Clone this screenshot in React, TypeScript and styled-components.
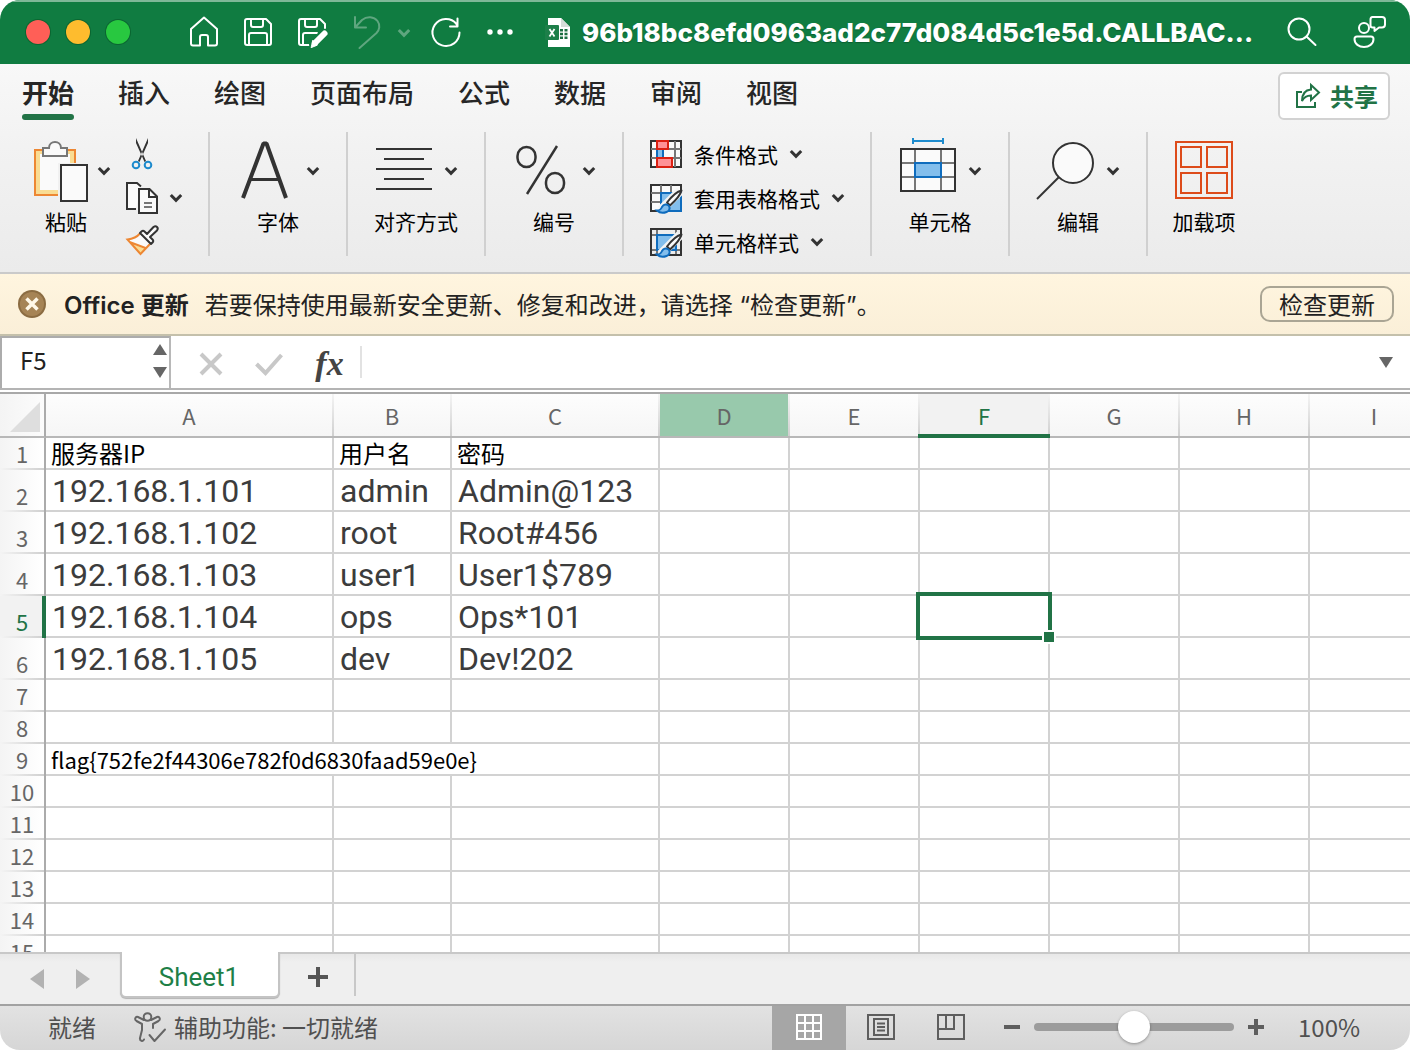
import React, { useState } from "react";
import styled, { createGlobalStyle, css } from "styled-components";

const ui = `"Inter", "Noto Sans CJK SC", sans-serif`;
const cjk = `"Noto Sans CJK SC", sans-serif`;
const green = "#217346";
const ink = "#333333";

const GlobalStyle = createGlobalStyle`
  * { box-sizing: border-box; }
  body { margin: 0; background: #ffffff; }
  button, input { font: inherit; color: inherit; margin: 0; }
  button { background: none; border: 0; padding: 0; cursor: default; }
  svg { display: block; flex: none; overflow: visible; }
`;

const Window = styled.div`
  display: flex;
  flex-direction: column;
  height: 100vh;
  overflow: hidden;
  border-radius: 20px;
  background: #ffffff;
  font-family: ${cjk};
  color: #222222;
`;

/* ---------- title bar ---------- */

const TitleBar = styled.header`
  display: flex;
  align-items: center;
  flex: none;
  height: 64px;
  padding: 0 26px;
  background: #107c41;
  border-top: 2px solid #7fb898;
  color: #ffffff;
`;

const Lights = styled.div`
  display: flex;
  gap: 16px;
  margin: 0 58px 2px 0;
`;

const Light = styled.button<{ $fill: string }>`
  width: 24px;
  height: 24px;
  border-radius: 50%;
  background: ${(p) => p.$fill};
  box-shadow: 0 0 0 1px rgba(0, 60, 20, 0.35);
`;

const QuickTools = styled.div`
  display: flex;
  align-items: center;
  gap: 20px;
`;

const ToolSet = styled.div`
  display: flex;
  align-items: center;
  gap: 22px;
`;

const Faded = styled.div`
  display: flex;
  align-items: center;
  gap: 16px;
  color: #5fa67f;
`;

const DocTitle = styled.h1`
  display: flex;
  align-items: center;
  gap: 12px;
  flex: 1;
  min-width: 0;
  margin: 0 0 0 30px;
  font: 800 26px/32px ${ui};
  white-space: nowrap;
  text-shadow: 0 1px 1px rgba(0, 50, 20, 0.4);
`;

const TitleActions = styled.div`
  display: flex;
  align-items: center;
  gap: 34px;
`;

/* ---------- ribbon ---------- */

const Ribbon = styled.section`
  flex: none;
  padding-top: 8px;
  background: linear-gradient(#f8f8f8, #f2f2f2 40%, #ebebeb);
  border-bottom: 2px solid #cacaca;
`;

const TabRow = styled.nav`
  display: flex;
  justify-content: space-between;
  padding: 0 20px 0 22px;
`;

const Tabs = styled.div`
  display: flex;
  gap: 44px;
`;

const Tab = styled.button<{ $active?: boolean }>`
  position: relative;
  height: 48px;
  padding-bottom: 8px;
  font: 500 26px/40px ${cjk};
  color: #262626;
  white-space: nowrap;
  ${(p) =>
    p.$active &&
    css`
      font-weight: 700;
      &::after {
        content: "";
        position: absolute;
        inset: auto 0 0;
        height: 6px;
        border-radius: 3px;
        background: ${green};
      }
    `}
`;

const ShareButton = styled.button`
  display: flex;
  align-items: center;
  gap: 8px;
  height: 48px;
  padding: 0 10px 0 14px;
  border: 2px solid #d2d2d2;
  border-radius: 6px;
  background: #ffffff;
  color: ${green};
  font: 700 24px/36px ${cjk};
`;

const Groups = styled.div`
  display: flex;
  padding: 12px 0 16px;
`;

const Group = styled.div<{ $width: number }>`
  display: flex;
  justify-content: center;
  flex: none;
  width: ${(p) => p.$width}px;
  height: 124px;
  border-right: 2px solid #d0d0d0;
  &:last-child { border-right: 0; }
`;

const BigButton = styled.button`
  display: flex;
  flex-direction: column;
  align-items: center;
  gap: 5px;
  padding-top: 8px;
  height: 124px;
  font: 400 21px/28px ${cjk};
  color: #000000;
`;

const IconRow = styled.span`
  display: flex;
  align-items: center;
  gap: 14px;
  height: 62px;
`;

const PasteButton = styled.button`
  display: grid;
  grid-template-columns: 64px 12px;
  grid-template-rows: 62px 28px;
  row-gap: 5px;
  align-items: center;
  align-content: start;
  padding-top: 8px;
  font: 400 21px/28px ${cjk};
  color: #000000;
`;

const ClipGroup = styled(Group)`
  justify-content: flex-start;
  gap: 16px;
  padding-left: 34px;
`;

const StyleGroup = styled(Group)`
  justify-content: flex-start;
  padding-left: 26px;
`;

const Stack = styled.div`
  display: flex;
  flex-direction: column;
`;

const SmallButton = styled.button`
  display: flex;
  align-items: center;
  flex: none;
  gap: 12px;
  height: 44px;
  font: 400 21px/28px ${cjk};
  color: #000000;
  white-space: nowrap;
`;

/* ---------- update notice ---------- */

const Notice = styled.section`
  display: flex;
  align-items: center;
  flex: none;
  height: 62px;
  padding: 0 16px 0 18px;
  background: linear-gradient(#fff5df, #faefd8);
  border-bottom: 2px solid #c4c0ab;
  font: 400 24px/36px ${ui};
  white-space: nowrap;
`;

const NoticeTitle = styled.strong`
  margin: 0 16px 0 18px;
  padding-top: 4px;
  font-weight: 600;
`;

const NoticeText = styled.span`
  flex: 1;
  padding-top: 4px;
`;

const NoticeButton = styled.button`
  height: 36px;
  padding: 4px 17px 0;
  border: 2px solid #aaa594;
  border-radius: 10px;
  line-height: 28px;
`;

/* ---------- formula bar ---------- */

const FormulaBar = styled.section`
  display: flex;
  flex: none;
  height: 58px;
  background: #ffffff;
  border-bottom: 2px solid #a8a8a8;
`;

const FormulaRow = styled.div`
  display: flex;
  align-items: center;
  flex: 1;
  height: 54px;
  padding-right: 17px;
  border-bottom: 2px solid #b4b4b4;
`;

const NameBox = styled.div`
  display: flex;
  align-items: center;
  width: 171px;
  height: 52px;
  padding: 0 2px 4px 0;
  border: 2px solid #acacac;
  border-bottom: 0;
  border-right-color: #b8b8b8;
`;

const NameInput = styled.input`
  flex: 1;
  min-width: 0;
  border: 0;
  padding: 0 0 2px 18px;
  background: none;
  outline: 0;
  font: 400 24px/36px ${cjk};
`;

const Spinner = styled.div`
  display: flex;
  flex-direction: column;
  gap: 12px;
`;

const FormulaTools = styled.div`
  display: flex;
  align-items: center;
  gap: 32px;
  padding: 4px 16px 0 28px;
`;

const FxButton = styled.button`
  width: 29px;
  font: italic 700 34px/32px "Liberation Serif", serif;
  color: #444444;
`;

const FormulaInput = styled.input`
  flex: 1;
  min-width: 0;
  height: 32px;
  border: 0;
  border-left: 2px solid #e2e2e2;
  outline: 0;
  padding: 0 12px;
  background: #ffffff;
`;

/* ---------- sheet ---------- */

const SheetArea = styled.main`
  flex: 1 1 0;
  min-height: 0;
  overflow: hidden;
  background: #ffffff;
`;

const Grid = styled.table`
  table-layout: fixed;
  width: 1440px;
  border-collapse: separate;
  border-spacing: 0;
`;

const Corner = styled.td`
  height: 44px;
  padding: 0 4px 4px 10px;
  vertical-align: bottom;
  background: linear-gradient(90deg, #f4f4f4, #fcfcfc);
  border-right: 2px solid #ababab;
  border-bottom: 2px solid #b8b8b8;
`;

const ColHead = styled.th<{ $tone: "plain" | "hover" | "active" }>`
  position: relative;
  height: 44px;
  padding: 0 2px 0 0;
  border-bottom: 2px solid #b8b8b8;
  background: linear-gradient(#fdfdfd, #f6f6f6);
  font: 400 22px/32px ${cjk};
  color: #666666;
  &::after {
    content: "";
    position: absolute;
    inset: 0 0 0 auto;
    width: 2px;
    background: linear-gradient(#f4f4f4, #d0d0d0);
  }
  ${(p) => p.$tone === "hover" && css`background: #98c9ac;`}
  ${(p) =>
    p.$tone === "active" &&
    css`
      background: #f2f2f2;
      color: ${green};
      &::before {
        content: "";
        position: absolute;
        inset: auto 0 -2px -2px;
        height: 4px;
        z-index: 1;
        background: ${green};
      }
    `}
`;

const RowHead = styled.th<{ $active: boolean }>`
  position: relative;
  padding: 0 0 4px;
  vertical-align: bottom;
  border-right: 2px solid #ababab;
  background: linear-gradient(90deg, #f4f4f4, #ffffff);
  font: 400 22px/26px ${cjk};
  color: #666666;
  &::after {
    content: "";
    position: absolute;
    inset: auto 0 0;
    height: 2px;
    background: linear-gradient(90deg, #f4f4f4, #d0d0d0);
  }
  ${(p) =>
    p.$active &&
    css`
      background: #f2f2f2;
      color: ${green};
      &::before {
        content: "";
        position: absolute;
        inset: 0 -2px 0 auto;
        width: 4px;
        z-index: 1;
        background: ${green};
      }
    `}
`;

const Row = styled.tr<{ $tall: boolean }>`
  height: ${(p) => (p.$tall ? 42 : 32)}px;
`;

const Cell = styled.td<{ $large?: boolean }>`
  position: relative;
  padding: 0 0 0 5px;
  border-right: 2px solid #d2d2d2;
  border-bottom: 2px solid #d2d2d2;
  vertical-align: bottom;
  white-space: nowrap;
  font: 400 24px/30px ${cjk};
  color: #000000;
  ${(p) =>
    p.$large &&
    css`
      padding-left: 6px;
      font: 400 32px/38px Roboto, sans-serif;
      color: #3c3c3c;
    `}
`;

const FlagText = styled.span`
  display: block;
  font-size: 22px;
  line-height: 30px;
`;

const Selection = styled.div`
  position: absolute;
  inset: -4px;
  border: 4px solid ${green};
  z-index: 1;
  &::after {
    content: "";
    position: absolute;
    right: -6px;
    bottom: -6px;
    width: 10px;
    height: 10px;
    background: ${green};
    box-shadow: 0 0 0 2px #ffffff;
  }
`;

/* ---------- sheet tabs ---------- */

const SheetTabs = styled.nav`
  display: flex;
  flex: none;
  height: 52px;
  background: linear-gradient(#e6e6e6, #efefef 10px);
`;

const TabNav = styled.div`
  display: flex;
  align-items: center;
  gap: 32px;
  width: 120px;
  padding-left: 30px;
  border-top: 2px solid #c8c8c8;
`;

const SheetTab = styled.button`
  width: 160px;
  height: 46px;
  padding: 6px 2px 0 0;
  border: 2px solid #c4c4c4;
  border-top: 0;
  border-radius: 0 0 6px 6px;
  background: #ffffff;
  box-shadow: 0 1px 1px rgba(0, 0, 0, 0.25);
  font: 400 26px/32px Roboto, sans-serif;
  color: #1e7f47;
`;

const TabRest = styled.div`
  flex: 1;
  border-top: 2px solid #c8c8c8;
`;

const AddSheet = styled.button`
  display: flex;
  align-items: center;
  justify-content: center;
  width: 76px;
  height: 42px;
  padding: 4px 0 0 2px;
  border-right: 2px solid #c8c8c8;
`;

/* ---------- status bar ---------- */

const StatusBar = styled.footer`
  display: flex;
  align-items: center;
  flex: none;
  height: 46px;
  padding: 0 48px;
  border-top: 2px solid #a2a2a2;
  background: linear-gradient(#e2e2e2, #d6d6d6);
  font: 400 24px/36px ${cjk};
  color: #505050;
  white-space: nowrap;
`;

const StatusText = styled.span`
  padding-bottom: 2px;
`;

const A11yButton = styled.button`
  display: flex;
  align-items: center;
  gap: 8px;
  margin-left: 38px;
`;

const Views = styled.div`
  display: flex;
  align-self: stretch;
  margin-left: auto;
`;

const ViewButton = styled.button<{ $active?: boolean }>`
  display: flex;
  align-items: center;
  justify-content: center;
  width: ${(p) => (p.$active ? 74 : 70)}px;
  padding-bottom: 2px;
  background: ${(p) => (p.$active ? "#a6a6a6" : "transparent")};
  color: ${(p) => (p.$active ? "#ffffff" : "#5e5e5e")};
`;

const Zoom = styled.div`
  display: flex;
  align-items: center;
  gap: 14px;
  margin-left: 18px;
  padding-bottom: 2px;
`;

const Slider = styled.input`
  appearance: none;
  width: 200px;
  height: 32px;
  background: none;
  &::-webkit-slider-runnable-track {
    height: 8px;
    border-radius: 4px;
    background: #9c9c9c;
  }
  &::-webkit-slider-thumb {
    appearance: none;
    width: 32px;
    height: 32px;
    margin-top: -12px;
    border-radius: 50%;
    background: #ffffff;
    box-shadow: 0 1px 3px rgba(0, 0, 0, 0.35);
  }
`;

const ZoomValue = styled.output`
  width: 64px;
  margin-left: 34px;
  padding-bottom: 2px;
`;

/* ---------- icons ---------- */

const Chevron = ({ color = ink, w = 3 }: { color?: string; w?: number }) => (
  <svg width="12" height="8" viewBox="0 0 12 8" fill="none" stroke={color} strokeWidth={w}>
    <path d="M.8 1 6 6.4 11.200 1" />
  </svg>
);

const Line32 = ({ children }: { children: React.ReactNode }) => (
  <svg width="32" height="32" viewBox="0 0 32 32" fill="none" stroke="currentColor" strokeWidth="2" strokeLinejoin="round" strokeLinecap="round">
    {children}
  </svg>
);

const HomeIcon = () => (
  <Line32>
    <path d="M3 12 16 .500 29 12V26.500a2 2 0 0 1-2 2H20V20q0-2-2-2h-4q-2 0-2 2v8.500H5a2 2 0 0 1-2-2z" />
  </Line32>
);
const SaveIcon = () => (
  <Line32>
    <path d="M5 2H24L29 7V26a2 2 0 0 1-2 2H5a2 2 0 0 1-2-2V4a2 2 0 0 1 2-2zM9 2v6q0 2 2 2h8q2 0 2-2V2M7 28V18q0-2 2-2h14q2 0 2 2v10" />
  </Line32>
);
const SaveEditIcon = () => (
  <Line32>
    <path d="M13 28H5a2 2 0 0 1-2-2V4a2 2 0 0 1 2-2H24L29 7v4M9 2v6q0 2 2 2h8q2 0 2-2V2M7 28V18q0-2 2-2h12" />
    <path d="M28 17 18 27.500" stroke="#107c41" strokeWidth="10" />
    <path d="M28.500 16.500 19 26" strokeWidth="6" />
    <path d="m17 23.500 4.500 4.500L15.500 30.500z" fill="currentColor" strokeWidth="1" />
  </Line32>
);
const UndoIcon = () => (
  <Line32>
    <path d="M5 0V10.500H16M5 10.500 12 3C17-1 24-.5 27.500 4c3 4 2 9-1 12L9.500 31" />
  </Line32>
);
const RedoIcon = () => (
  <Line32>
    <path d="M29.500 15.500A13.500 13.500 0 1 1 26.500 7L27.500 9M27.500 1.500V9.500H20" />
  </Line32>
);
const MoreIcon = () => (
  <svg width="32" height="32" viewBox="0 0 32 32" fill="currentColor">
    <circle cx="6" cy="15" r="2.700" /><circle cx="16" cy="15" r="2.700" /><circle cx="26" cy="15" r="2.700" />
  </svg>
);
const FileIcon = () => (
  <svg width="24" height="30" viewBox="0 0 24 30">
    <path d="M2 0H15L24 9V29H2z" fill="#ffffff" />
    <path d="M15 0V9H24z" fill="#d5ddd8" />
    <path d="M14 11h3v2.500h-3zM18.500 11h3v2.500h-3zM14 14.800h3v2.500h-3zM18.500 14.800h3v2.500h-3zM14 18.500h3V21h-3zM18.500 18.500h3V21h-3z" fill="#1a6e41" />
    <rect x="-1" y="7" width="14" height="15" rx="1" fill="#1d7f49" />
    <path d="m3.500 11 5 7.500M8.500 11l-5 7.500" stroke="#ffffff" strokeWidth="1.800" />
  </svg>
);
const SearchIcon = () => (
  <Line32>
    <circle cx="13" cy="12" r="10.500" /><path d="m20.500 19.500 9 8.500" />
  </Line32>
);
const PeopleIcon = () => (
  <Line32>
    <circle cx="12" cy="11" r="5" />
    <path d="M5 19.500H19q2.500 0 2.500 2.500c0 5-4.500 8-9.500 8s-9.500-3-9.500-8q0-2.500 2.500-2.500z" />
    <path d="M20.500 0h9.500q3 0 3 3V7.500q0 3-3 3h-3L22.500 14V10.500H20.500q-2 0-2-2V2.500q0-2.500 2-2.500z" />
  </Line32>
);
const ShareIcon = () => (
  <svg width="28" height="26" viewBox="0 0 28 26" fill="none" stroke="currentColor" strokeWidth="2">
    <path d="M8 9H3V24H21V19" />
    <path d="M17 2 25 9.500 17 17V12.500C12.500 12.500 10 14 8 18 8 11 11.500 7 17 6.500z" />
  </svg>
);
const PasteIcon = () => (
  <svg width="54" height="60" viewBox="0 0 54 60" fill="none">
    <path d="M1 9H41V54H1z" fill="#f9dc93" stroke="#ed8733" strokeWidth="2" />
    <path d="M6 13H36V49H6z" fill="#fafafa" />
    <path d="M24 22H54V60H24z" fill="#f1f1f1" />
    <path d="M9 7H15C15-1 27-1 27 7H33V15H9z" fill="#fafafa" stroke="#777777" strokeWidth="2" />
    <path d="M27 24H53V60H27z" fill="#fafafa" stroke={ink} strokeWidth="2" />
  </svg>
);
const CutIcon = () => (
  <svg width="32" height="32" viewBox="0 0 32 32" fill="none">
    <path d="M10 0 20 23 18.500 24 10 5zM22 0 12 23l1.500 1L22 5z" fill={ink} />
    <circle cx="10" cy="27" r="3.300" stroke="#1e8bcd" strokeWidth="2" />
    <circle cx="22" cy="27" r="3.300" stroke="#1e8bcd" strokeWidth="2" />
  </svg>
);
const CopyIcon = () => (
  <svg width="32" height="32" viewBox="0 0 32 32" fill="none" stroke={ink} strokeWidth="2">
    <path d="M10 27H1V1H11L15 4.500" fill="#fafafa" />
    <path d="M13 7H23.500L31 14.500V31H13z" fill="#fafafa" />
    <path d="M23 7V15H31" />
    <path d="M18 21H26M18 25H26" stroke="#777777" />
  </svg>
);
const BrushIcon = () => (
  <svg width="32" height="32" viewBox="0 0 32 32" fill="none">
    <path d="M1.500 14.500 14 8 25 18.500 14.500 28.500z" fill="#fafafa" />
    <path d="m4 17 15.500 6-5 5.500z" fill="#f9dc93" />
    <path d="M14 7.500C11 11 6 13 1.500 13.500L14.500 28 24 18M3.500 16 19.500 22" stroke="#ed8733" strokeWidth="2" />
    <path d="M15.500 5.500q1.500-1.500 3 0l2.500 2.500 6.500-7q2-1.500 3.500 0t0 3.500l-7 6.500 2.500 2.500q1.500 1.500 0 3l-1.500 1.500L14 7z" fill="#fafafa" stroke={ink} strokeWidth="2" strokeLinejoin="round" />
  </svg>
);
const FontIcon = () => (
  <svg width="56" height="60" viewBox="1 0 56 60" fill="none" stroke={ink} strokeWidth="4">
    <path d="M7 57 27.500 2.500H30.500L50 57" strokeLinejoin="bevel" />
    <path d="M14 38.500H43" strokeWidth="3" />
  </svg>
);
const AlignIcon = () => (
  <svg width="56" height="60" viewBox="-1 0 56 60" stroke={ink} strokeWidth="2">
    <path d="M0 8H56M8 18H48M0 28H56M8 38H48M0 48H56" />
  </svg>
);
const PercentIcon = () => (
  <svg width="56" height="60" viewBox="-2 0 56 60" fill="none" stroke={ink} strokeWidth="2.500">
    <rect x="2.500" y="6" width="18" height="20" rx="9" />
    <rect x="31" y="32" width="18" height="20" rx="9" />
    <path d="M42 5 12 53" />
  </svg>
);
const CondIcon = () => (
  <svg width="32" height="32" viewBox="0 0 32 32" fill="none" strokeWidth="2">
    <path d="M1 3H31V29H1z" fill="#fafafa" stroke={ink} />
    <path d="M1 11H31M1 20H31M25 3V29M7 3V29" stroke="#777777" />
    <path d="M7 12H14V20H7z" fill="#83beec" /><path d="M7 11V20M13 11V20" stroke="#0f6cbd" />
    <path d="M7 3H18V11H7zM7 20H22V29H7z" fill="#ff9196" stroke="#dc2012" />
  </svg>
);
const PaintBrush = () => (
  <>
    <path d="M11 28 30 9" stroke="#f4f4f4" strokeWidth="9" />
    <path d="M17 20.500C22 14 27 9.500 31.500 8.500 30.500 13 26 18 20 23.500z" fill="#fafafa" stroke={ink} strokeWidth="2" strokeLinejoin="round" />
    <path d="M7 28.500c3 0 4-1 5-3.500 1.500-3 5-3.500 7-1 1.500 2.500 0 5-2.500 6-3 1.200-7 .8-9.500-1.500z" fill="#83beec" stroke="#0f6cbd" strokeWidth="2" />
  </>
);
const TableStyleIcon = () => (
  <svg width="32" height="32" viewBox="0 0 32 32" fill="none" strokeWidth="2">
    <path d="M1 3H31V29H1z" fill="#fafafa" stroke={ink} />
    <path d="M1 11H31M1 20H12M11 3V29M21 3V11" stroke="#777777" />
    <path d="M11 11H31V29H11z" fill="#83beec" stroke="#0f6cbd" />
    <PaintBrush />
  </svg>
);
const CellStyleIcon = () => (
  <svg width="32" height="32" viewBox="0 0 32 32" fill="none" strokeWidth="2">
    <path d="M1 9H31M1 24H31M7 3V29M26 3V29" stroke="#777777" />
    <path d="M1 3H31V29H1z" stroke={ink} />
    <path d="M7 9H26V24H7z" fill="#83beec" stroke="#0f6cbd" />
    <PaintBrush />
  </svg>
);
const CellsIcon = () => (
  <svg width="56" height="60" viewBox="-1 0 56 60" fill="none" strokeWidth="2">
    <path d="M13-3V3M43-3V3M13 0H43" stroke="#1e8bcd" />
    <path d="M1 8H55V50H1z" fill="#fafafa" />
    <path d="M1 22H55M1 36H55M15 8V50M41 8V50" stroke="#777777" />
    <path d="M1 8H55V50H1z" stroke={ink} />
    <path d="M15 22H41V36H15z" fill="#83beec" stroke="#0f6cbd" />
  </svg>
);
const FindIcon = () => (
  <svg width="56" height="60" viewBox="0 0 56 60" fill="none" stroke={ink} strokeWidth="2">
    <circle cx="36" cy="22" r="20" fill="#fafafa" />
    <path d="M22 36 0 58" />
  </svg>
);
const AddinsIcon = () => (
  <svg width="58" height="60" viewBox="0 0 58 60" fill="none" stroke="#dd4b1a" strokeWidth="2">
    <path d="M1 1H57V57H1zM6 6H26V26H6zM32 6H52V26H32zM6 32H26V52H6zM32 32H52V52H32z" />
  </svg>
);
const Triangle = ({ dir, color = "#666666" }: { dir: "up" | "down" | "left" | "right"; color?: string }) => {
  const side = dir === "left" || dir === "right";
  const d = { up: "M0 11 7 0 14 11z", down: "M0 0H14L7 11z", left: "M14 0V20L0 10z", right: "M0 0V20L14 10z" }[dir];
  return (
    <svg width="14" height={side ? 20 : 11} fill={color}>
      <path d={d} />
    </svg>
  );
};
const A11yIcon = () => (
  <svg width="32" height="32" viewBox="0 0 32 32" fill="none" stroke="#666666" strokeWidth="2" strokeLinecap="round" strokeLinejoin="round">
    <circle cx="13.500" cy="5" r="3.800" />
    <path d="M10 8 4 5C1.500 4 0 7.500 2.500 9L8 12V18L6 26c-.5 3 3 4 4 1.500M17 8l6-3c2.500-1 4 2.500 1.500 4L19 12v4" />
    <path d="m15.500 23 5 6L31 17.500" />
  </svg>
);

/* ---------- data ---------- */

const ribbonTabs = ["开始", "插入", "绘图", "页面布局", "公式", "数据", "审阅", "视图"];
const columns = [
  { name: "A", width: 288 },
  { name: "B", width: 118 },
  { name: "C", width: 208 },
  ...["D", "E", "F", "G", "H", "I"].map((name) => ({ name, width: 130 })),
];
const rows: Record<number, string[]> = {
  1: ["服务器IP", "用户名", "密码"],
  2: ["192.168.1.101", "admin", "Admin@123"],
  3: ["192.168.1.102", "root", "Root#456"],
  4: ["192.168.1.103", "user1", "User1$789"],
  5: ["192.168.1.104", "ops", "Ops*101"],
  6: ["192.168.1.105", "dev", "Dev!202"],
};
const flag = "flag{752fe2f44306e782f0d6830faad59e0e}";

const Big = ({ icon, label, menu = true }: { icon: React.ReactNode; label: string; menu?: boolean }) => (
  <BigButton>
    <IconRow>
      {icon}
      {menu && <Chevron />}
    </IconRow>
    <span>{label}</span>
  </BigButton>
);

export default function App() {
  const [zoom, setZoom] = useState(100);
  const [ref, setRef] = useState("F5");
  const [formula, setFormula] = useState("");

  return (
    <Window>
      <GlobalStyle />
      <TitleBar>
        <Lights>
          <Light $fill="#ff5f57" aria-label="关闭" />
          <Light $fill="#febc2e" aria-label="最小化" />
          <Light $fill="#28c840" aria-label="缩放" />
        </Lights>
        <QuickTools>
          <ToolSet>
            <button aria-label="主页"><HomeIcon /></button>
            <button aria-label="保存"><SaveIcon /></button>
            <button aria-label="另存为"><SaveEditIcon /></button>
            <Faded>
              <button aria-label="撤消"><UndoIcon /></button>
              <Chevron color="currentColor" />
            </Faded>
          </ToolSet>
          <ToolSet>
            <button aria-label="重复"><RedoIcon /></button>
            <button aria-label="更多"><MoreIcon /></button>
          </ToolSet>
        </QuickTools>
        <DocTitle>
          <FileIcon />
          96b18bc8efd0963ad2c77d084d5c1e5d.CALLBAC...
        </DocTitle>
        <TitleActions>
          <button aria-label="搜索"><SearchIcon /></button>
          <button aria-label="协作"><PeopleIcon /></button>
        </TitleActions>
      </TitleBar>

      <Ribbon>
        <TabRow>
          <Tabs>
            {ribbonTabs.map((t, i) => (
              <Tab key={t} $active={i === 0}>{t}</Tab>
            ))}
          </Tabs>
          <ShareButton><ShareIcon />共享</ShareButton>
        </TabRow>
        <Groups>
          <ClipGroup $width={210}>
            <PasteButton>
              <PasteIcon />
              <Chevron />
              <span>粘贴</span>
            </PasteButton>
            <Stack>
              <SmallButton aria-label="剪切"><CutIcon /></SmallButton>
              <SmallButton aria-label="复制"><CopyIcon /><Chevron /></SmallButton>
              <SmallButton aria-label="格式刷"><BrushIcon /></SmallButton>
            </Stack>
          </ClipGroup>
          <Group $width={138}><Big icon={<FontIcon />} label="字体" /></Group>
          <Group $width={138}><Big icon={<AlignIcon />} label="对齐方式" /></Group>
          <Group $width={138}><Big icon={<PercentIcon />} label="编号" /></Group>
          <StyleGroup $width={248}>
            <Stack>
              <SmallButton><CondIcon />条件格式<Chevron /></SmallButton>
              <SmallButton><TableStyleIcon />套用表格格式<Chevron /></SmallButton>
              <SmallButton><CellStyleIcon />单元格样式<Chevron /></SmallButton>
            </Stack>
          </StyleGroup>
          <Group $width={138}><Big icon={<CellsIcon />} label="单元格" /></Group>
          <Group $width={138}><Big icon={<FindIcon />} label="编辑" /></Group>
          <Group $width={112}><Big icon={<AddinsIcon />} label="加载项" menu={false} /></Group>
        </Groups>
      </Ribbon>

      <Notice>
        <button aria-label="关闭通知">
          <svg width="28" height="28" viewBox="0 0 28 28">
            <circle cx="14" cy="14" r="14" fill="#8b6c42" />
            <circle cx="14" cy="14" r="12" fill="#a68456" />
            <path d="m8.500 8.500 11 11M19.500 8.500l-11 11" stroke="#fff8e8" strokeWidth="3.500" />
          </svg>
        </button>
        <NoticeTitle>Office 更新</NoticeTitle>
        <NoticeText>若要保持使用最新安全更新、修复和改进，请选择 “检查更新”。</NoticeText>
        <NoticeButton>检查更新</NoticeButton>
      </Notice>

      <FormulaBar>
        <FormulaRow>
          <NameBox>
            <NameInput aria-label="名称框" value={ref} onChange={(e) => setRef(e.target.value)} />
            <Spinner>
              <button aria-label="上一个"><Triangle dir="up" /></button>
              <button aria-label="下一个"><Triangle dir="down" /></button>
            </Spinner>
          </NameBox>
          <FormulaTools>
            <button aria-label="取消">
              <svg width="24" height="24" viewBox="0 0 24 24" stroke="#c8c8c8" strokeWidth="4"><path d="m2 2 20 20M22 2 2 22" /></svg>
            </button>
            <button aria-label="输入">
              <svg width="28" height="24" viewBox="0 0 28 24" fill="none" stroke="#c8c8c8" strokeWidth="4"><path d="m1.500 12 9 9L26.500 3" /></svg>
            </button>
            <FxButton aria-label="插入函数">fx</FxButton>
          </FormulaTools>
          <FormulaInput aria-label="编辑栏" value={formula} onChange={(e) => setFormula(e.target.value)} />
          <button aria-label="展开编辑栏"><Triangle dir="down" /></button>
        </FormulaRow>
      </FormulaBar>

      <SheetArea>
        <Grid>
          <colgroup>
            <col width={46} />
            {columns.map((c) => <col key={c.name} width={c.width} />)}
          </colgroup>
          <thead>
            <tr>
              <Corner><svg width="30" height="30" fill="#dedede"><path d="M30 0V30H0z" /></svg></Corner>
              {columns.map((c) => (
                <ColHead key={c.name} scope="col" $tone={c.name === "D" ? "hover" : c.name === "F" ? "active" : "plain"}>
                  {c.name}
                </ColHead>
              ))}
            </tr>
          </thead>
          <tbody>
            {Array.from({ length: 15 }, (_, i) => i + 1).map((n) => {
              const tall = n > 1 && n < 7;
              return (
                <Row key={n} $tall={tall}>
                  <RowHead scope="row" $active={n === 5}>{n}</RowHead>
                  {n === 9 && <Cell colSpan={3}><FlagText>{flag}</FlagText></Cell>}
                  {columns.slice(n === 9 ? 3 : 0).map((c, i) => (
                    <Cell key={c.name} $large={tall}>
                      {n === 9 ? null : rows[n]?.[i]}
                      {n === 5 && c.name === "F" && <Selection />}
                    </Cell>
                  ))}
                </Row>
              );
            })}
          </tbody>
        </Grid>
      </SheetArea>

      <SheetTabs>
        <TabNav>
          <button aria-label="上一张工作表"><Triangle dir="left" color="#b2b2b2" /></button>
          <button aria-label="下一张工作表"><Triangle dir="right" color="#b2b2b2" /></button>
        </TabNav>
        <SheetTab>Sheet1</SheetTab>
        <TabRest>
          <AddSheet aria-label="新建工作表">
            <svg width="20" height="20" stroke="#555555" strokeWidth="4"><path d="M10 0V20M0 10H20" /></svg>
          </AddSheet>
        </TabRest>
      </SheetTabs>

      <StatusBar>
        <StatusText>就绪</StatusText>
        <A11yButton><A11yIcon /><StatusText>辅助功能: 一切就绪</StatusText></A11yButton>
        <Views>
          <ViewButton $active aria-label="普通">
            <svg width="26" height="26" viewBox="0 0 26 26" fill="none" stroke="currentColor" strokeWidth="2">
              <path d="M1 1H25V25H1zM1 9H25M1 17H25M9 1V25M17 1V25" />
            </svg>
          </ViewButton>
          <ViewButton aria-label="页面布局">
            <svg width="28" height="26" viewBox="0 0 28 26" fill="none" stroke="currentColor" strokeWidth="2">
              <path d="M1 1H27V25H1zM7 5H21V21H7zM10 9.500H18M10 13H18M10 16.500H18" />
            </svg>
          </ViewButton>
          <ViewButton aria-label="分页预览">
            <svg width="28" height="26" viewBox="0 0 28 26" fill="none" stroke="currentColor" strokeWidth="2">
              <path d="M1 1H27V25H1zM1 15H17V1M9 1V15" />
            </svg>
          </ViewButton>
        </Views>
        <Zoom>
          <button aria-label="缩小">
            <svg width="16" height="16" stroke="#5e5e5e" strokeWidth="4"><path d="M0 8H16" /></svg>
          </button>
          <Slider type="range" aria-label="显示比例" min={0} max={200} value={zoom} onChange={(e) => setZoom(Number(e.target.value))} />
          <button aria-label="放大">
            <svg width="16" height="16" stroke="#5e5e5e" strokeWidth="4"><path d="M0 8H16M8 0V16" /></svg>
          </button>
        </Zoom>
        <ZoomValue>{zoom}%</ZoomValue>
      </StatusBar>
    </Window>
  );
}
